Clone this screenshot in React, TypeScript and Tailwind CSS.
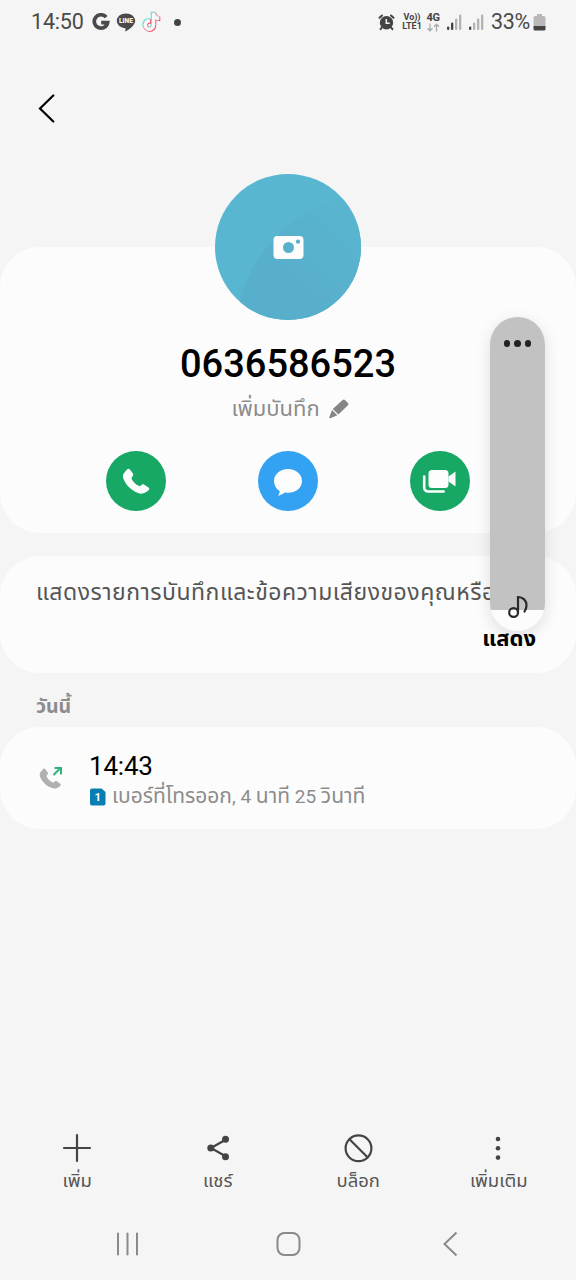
import type { ReactNode } from "react";

function GoogleIcon() {
  return (
    <svg width="18" height="18" viewBox="0 0 18 18" fill="none" stroke="#4a4a4a" strokeWidth="3.7">
      <path d="M14.200 4.200A6.700 6.700 0 1 0 15.600 9.600H9.200" />
    </svg>
  );
}

function LineIcon() {
  return (
    <svg width="20" height="19" viewBox="0 0 20 19">
      <path d="M10 0.500c5.100 0 9.200 3.200 9.200 7.200 0 4-5.200 8.200-9.200 10.600-.5.300-.8 0-.7-.5l.3-2.500C4.700 14.900.8 11.700.8 7.700.8 3.700 4.900.5 10 .5z" fill="#4a4a4a" />
      <text x="3" y="10.200" fontSize="6.500" fontWeight="900" fill="#f5f5f5" textLength="14" lengthAdjust="spacingAndGlyphs" className="font-['Roboto',sans-serif]">LINE</text>
    </svg>
  );
}

function TiktokIcon() {
  const note = "M10.500 1.500h3c.300 2.300 1.700 3.800 4 4v3c-1.500 0-2.900-.500-4-1.300v6.300a5.700 5.700 0 1 1-5.200-5.700v3.100a2.600 2.600 0 1 0 2.200 2.600z";
  return (
    <svg className="-ml-px" width="20" height="22" viewBox="0 0 20 22">
      <path d={note} fill="none" stroke="#5fe3e0" strokeWidth="1.600" />
      <path d={note} fill="none" stroke="#f0566f" strokeWidth="1.600" transform="translate(1 1)" />
      <path d={note} fill="#fafafa" stroke="#fafafa" strokeWidth=".6" transform="translate(.5 .5)" />
    </svg>
  );
}

function AlarmIcon() {
  return (
    <svg width="17" height="17" viewBox="0 0 17 17">
      <circle cx="8.500" cy="8.700" r="6.700" fill="#444" />
      <path d="M1.500 3.800 4 1.500M15.500 3.800 13 1.500M3.800 13.500 2.600 15.200M13.200 13.500l1.200 1.700" stroke="#444" strokeWidth="2" strokeLinecap="round" />
      <path d="M8.300 5v4.200h3.400" fill="none" stroke="#f5f5f5" strokeWidth="1.500" />
    </svg>
  );
}

function SignalIcon({ level }: { level: number }) {
  return (
    <svg width="15" height="16" viewBox="0 0 15 16">
      {[3.5, 7.5, 11.5, 15.5].map((h, i) => (
        <rect key={h} x={i * 4} y={16 - h} width="2.300" height={h} rx="1" fill={i < level ? "#444" : "#b3b3b3"} />
      ))}
    </svg>
  );
}

function StatusBar() {
  return (
    <div className="flex h-11 items-center pl-[31px] pr-[30px] text-[#4a4a4a]">
      <span className="w-[52px] text-[21.500px] leading-none tracking-[-0.2px]">14:50</span>
      <div className="ml-[9px] flex items-center gap-[6px]">
        <GoogleIcon />
        <LineIcon />
        <TiktokIcon />
      </div>
      <span className="ml-[13px] size-[7px] rounded-full bg-[#444]" />
      <div className="ml-auto flex items-center">
        <AlarmIcon />
        <div className="ml-[6px] flex w-[22px] flex-col items-center text-[9px] font-bold leading-[9px] text-[#444]">
          <span className="h-[9px]">Vo))</span>
          <span className="h-[9px]">LTE1</span>
        </div>
        <div className="ml-[2px] flex w-[16px] flex-col items-center text-[11px] font-bold leading-[10px] tracking-[-0.3px] text-[#444]">
          <span className="h-[10px]">4G</span>
          <svg width="14" height="9" viewBox="0 0 14 9" fill="none" stroke="#aaa" strokeWidth="1.300">
            <path d="M4 .500v7M1.500 5.200 4 7.900l2.500-2.700M10.500 8.500v-7M8 3.800l2.500-2.700L13 3.800" />
          </svg>
        </div>
        <div className="ml-[6px] flex gap-[7px]">
          <SignalIcon level={2} />
          <SignalIcon level={1} />
        </div>
        <span className="ml-[7px] w-[40px] text-[21.500px] leading-none tracking-[-0.3px]">33%</span>
        <svg className="ml-[2px]" width="13" height="17" viewBox="0 0 13 17">
          <path d="M4 0h5v2h2a1.500 1.500 0 0 1 1.500 1.500V12H.500V3.500A1.500 1.500 0 0 1 2 2h2z" fill="#b8b8b8" />
          <path d="M.500 12h12v3A1.500 1.500 0 0 1 11 16.500H2A1.500 1.500 0 0 1 .500 15z" fill="#444" />
        </svg>
      </div>
    </div>
  );
}

function Avatar() {
  return (
    <svg className="-mt-[73px] shrink-0" width="146" height="146" viewBox="0 0 146 146">
      <defs>
        <clipPath id="avatar">
          <circle cx="73" cy="73" r="73" />
        </clipPath>
        <linearGradient id="shade" x1="0" y1="1" x2="1" y2="0">
          <stop offset=".4" stopColor="#58afcc" />
          <stop offset="1" stopColor="#58b6d0" />
        </linearGradient>
      </defs>
      <g clipPath="url(#avatar)">
        <rect width="146" height="146" fill="#58b6d0" />
        <path d="M22 146C25 96 66 38 128 25h20v121z" fill="url(#shade)" />
      </g>
      <path fillRule="evenodd" d="M62.500 62h22a4 4 0 0 1 4 4v15a4 4 0 0 1-4 4h-22a4 4 0 0 1-4-4V66a4 4 0 0 1 4-4zM73.500 68a5.500 5.500 0 1 0 0 11 5.500 5.500 0 0 0 0-11zM83 65.600a2.100 2.100 0 1 0 0 4.200 2.100 2.100 0 0 0 0-4.200z" fill="#fdfdfd" />
    </svg>
  );
}

const handset = "M2.500 4.500 5.200 1.300c.8-.9 1.900-.8 2.500 0l3.200 4.200c.6.800.5 1.600-.1 2.400L9.300 9.900c1.500 3.900 4.400 6.800 8.500 8.400l2.100-1.600c.8-.6 1.600-.6 2.400 0l4.200 2.900c.9.700 1 1.700.2 2.500-3 3.300-6.900 4.500-11.200 2.700C9 22.200 3.700 16.900 1.300 10.500.5 8.200.9 6.300 2.500 4.500z";

function CallActions() {
  return (
    <div className="mt-[27px] flex gap-[92px]">
      <button className="flex size-[60px] items-center justify-center rounded-full bg-[#17a865]">
        <svg className="mt-px" width="28" height="28" viewBox="0 0 28 28" fill="#fdfdfd">
          <path d={handset} />
        </svg>
      </button>
      <button className="flex size-[60px] items-center justify-center rounded-full bg-[#34a2f3]">
        <svg width="30" height="30" viewBox="0 0 30 30" fill="#fdfdfd">
          <path d="M15 3c7.800 0 14 5.300 14 12s-6 11.800-14 11.800c-1.300 0-2.500-.1-3.600-.4-1.700 1.600-4 2.900-6.400 3.300 1.100-1.400 1.700-3 1.700-4.700C3.200 22.900 1 19.300 1 15 1 8.300 7.200 3 15 3z" />
        </svg>
      </button>
      <button className="flex size-[60px] items-center justify-center rounded-full bg-[#17a865]">
        <svg className="-ml-[2px]" width="34" height="24" viewBox="0 0 34 24" fill="#fdfdfd">
          <rect x="6.500" y="1" width="20" height="18" rx="3.500" />
          <path d="M26.500 7.500 33.500 2.500v15l-7-5z" />
          <path d="M2.200 7.500v11a4 4 0 0 0 4 4h15.500" fill="none" stroke="#fdfdfd" strokeWidth="2.600" strokeLinecap="round" />
        </svg>
      </button>
    </div>
  );
}

function VolumeSlider() {
  return (
    <div className="absolute left-[490px] top-[317px] flex h-[314px] w-[55px] flex-col items-center overflow-hidden rounded-full bg-[#fcfcfc] shadow-[0_4px_16px_rgba(0,0,0,0.12)]">
      <div className="flex h-[293px] w-full shrink-0 justify-center gap-[4px] bg-[#c2c2c2] pt-[23px]">
        <span className="size-[6.500px] rounded-full bg-[#222]" />
        <span className="size-[6.500px] rounded-full bg-[#222]" />
        <span className="size-[6.500px] rounded-full bg-[#222]" />
      </div>
      <svg className="relative -mt-[15px] shrink-0" width="22" height="24" viewBox="0 0 22 24" fill="none" stroke="#292929" strokeWidth="2.200" strokeLinecap="round">
        <circle cx="6.600" cy="17.500" r="4.400" />
        <path d="M11 17.500V2c5 0 8.500 3.500 8.500 8.500 0 2-.7 4-2 6" />
      </svg>
    </div>
  );
}

function ToolbarItem({ label, children }: { label: string; children: ReactNode }) {
  return (
    <button className="flex w-[140.500px] flex-col items-center text-[#555]">
      <svg width="30" height="30" viewBox="0 0 30 30" fill="none" stroke="#444" strokeWidth="2.200" strokeLinecap="round">
        {children}
      </svg>
      <span className="mt-[4px] text-[18.500px] leading-[28px]">{label}</span>
    </button>
  );
}

export default function App() {
  return (
    <div className="relative flex h-[1280px] w-[576px] flex-col overflow-hidden bg-[#f5f5f5] font-['Roboto','Noto_Sans_Thai','Noto_Sans',sans-serif]">
      <StatusBar />

      <header className="h-[203px] pl-[37px] pt-[50px]">
        <svg width="20" height="30" viewBox="0 0 20 30" fill="none" stroke="#000" strokeWidth="2.200" strokeLinecap="round">
          <path d="M16.300 1.500 3 14.500l13.300 13" />
        </svg>
      </header>

      <section className="flex h-[286px] flex-col items-center rounded-[40px] bg-[#fcfcfc]">
        <Avatar />
        <h1 className="mt-[22px] text-[38px] font-medium leading-[44px] text-black">0636586523</h1>
        <div className="mt-[8px] ml-[4px] flex h-[30px] items-center gap-[9px] text-[#8c8c8c]">
          <span className="text-[22px] leading-[30px]">เพิ่มบันทึก</span>
          <svg width="20" height="20" viewBox="0 0 20 20" fill="#858585">
            <path d="M13.600 1a1.700 1.700 0 0 1 2.400 0l2.900 2.900a1.700 1.700 0 0 1 0 2.400L9.400 15.400 3.800 9.900zM3 11 8.400 16.300 1.200 19.200a.7.700 0 0 1-.9-.9z" />
          </svg>
        </div>
        <CallActions />
      </section>

      <section className="mt-[23px] flex h-[117px] flex-col rounded-[40px] bg-[#fcfcfc] px-[36px] pt-[21px]">
        <p className="whitespace-nowrap text-[23px] leading-[32px] tracking-[0.5px] text-[#555]">แสดงรายการบันทึกและข้อความเสียงของคุณหรือ</p>
        <button className="mr-[4px] mt-[14px] self-end text-[22px] font-bold leading-[32px] text-black">แสดง</button>
      </section>

      <h2 className="h-[54px] pl-[36px] pt-[20px] text-[19.500px] font-bold leading-[28px] text-[#8c8c8c]">วันนี้</h2>

      <section className="flex h-[102px] rounded-[40px] bg-[#fcfcfc] pl-[38px] pt-[23px]">
        <svg className="mt-[15px]" width="26" height="26" viewBox="0 0 26 26">
          <path d={handset} fill="#b0b0b0" transform="translate(1 3) scale(.8)" />
          <path d="m15.500 10 7-7M16.500 3h6.500v6.500" fill="none" stroke="#2fb57c" strokeWidth="2" />
        </svg>
        <div className="ml-[25px]">
          <div className="text-[26px] leading-[32px] tracking-[-0.2px] text-black">14:43</div>
          <div className="flex items-center text-[#8c8c8c]">
            <svg className="mr-[6px] ml-[1px] font-['Roboto',sans-serif]" width="16" height="18" viewBox="0 0 16 18">
              <path d="M2 .500h9.500L15.500 4v11.500a2 2 0 0 1-2 2H2a2 2 0 0 1-2-2v-13a2 2 0 0 1 2-2z" fill="#087eb2" />
              <text x="7.800" y="13" textAnchor="middle" fontSize="11.500" fontWeight="700" fill="#fff">1</text>
            </svg>
            <span className="whitespace-nowrap text-[21px] leading-[28px]">
              เบอร์ที่โทรออก<span className="text-[19px]">, 4 </span>นาที<span className="text-[19px]"> 25 </span>วินาที
            </span>
          </div>
        </div>
      </section>

      <div className="mt-auto flex h-[75px] pl-[7px]">
        <ToolbarItem label="เพิ่ม">
          <path d="M15 2v26M2 15h26" />
        </ToolbarItem>
        <ToolbarItem label="แชร์">
          <path d="M23 6.500 8 15l15 8.500" />
          <g fill="#444" stroke="none">
            <circle cx="22.500" cy="6.300" r="3.500" />
            <circle cx="7.800" cy="15" r="3.500" />
            <circle cx="22.500" cy="23.700" r="3.500" />
          </g>
        </ToolbarItem>
        <ToolbarItem label="บล็อก">
          <circle cx="15.500" cy="15.300" r="12.900" />
          <path d="m6.500 6.300 18 18" />
        </ToolbarItem>
        <ToolbarItem label="เพิ่มเติม">
          <g fill="#444" stroke="none">
            <circle cx="14" cy="6" r="2.300" />
            <circle cx="14" cy="15.300" r="2.300" />
            <circle cx="14" cy="24.600" r="2.300" />
          </g>
        </ToolbarItem>
      </div>

      <nav className="flex h-[72px] items-center justify-between pl-[114px] pr-[113px]">
        <svg width="26" height="26" viewBox="0 0 26 26" stroke="#8a8a8a" strokeWidth="2" strokeLinecap="round">
          <path d="M4 2.500v21M13.500 2.500v21M23 2.500v21" />
        </svg>
        <svg width="26" height="26" viewBox="0 0 26 26" fill="none" stroke="#8a8a8a" strokeWidth="2">
          <rect x="1.500" y="2" width="22" height="22" rx="7" />
        </svg>
        <svg width="26" height="26" viewBox="0 0 26 26" fill="none" stroke="#8a8a8a" strokeWidth="2">
          <path d="M19.500 1.500 7.500 13l12 11.500" />
        </svg>
      </nav>

      <VolumeSlider />
    </div>
  );
}
